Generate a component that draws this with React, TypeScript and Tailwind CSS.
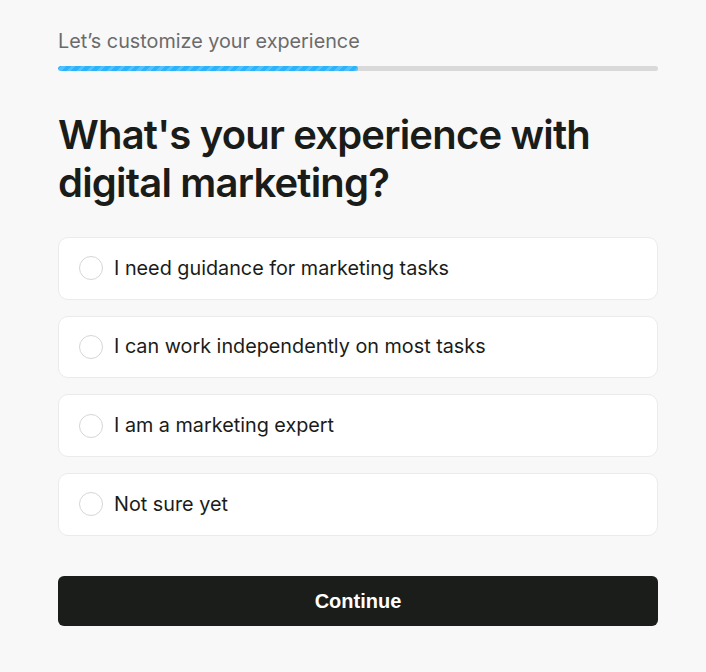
import React from "react";

const options = [
  "I need guidance for marketing tasks",
  "I can work independently on most tasks",
  "I am a marketing expert",
  "Not sure yet",
];

export default function App() {
  return (
    <div className="min-h-[672px] w-full bg-[#f8f8f8] flex" style={{ fontFamily: "Inter, 'Noto Sans', sans-serif" }}>
      <div className="ml-[58px] w-[600px] pt-[28px] flex flex-col">
        <div className="text-[19.8px] leading-[26px] text-[#6b6b6b]">Let’s customize your experience</div>
        <div className="mt-[12px] h-[5px] w-full rounded-full bg-[#d9d9d9] overflow-hidden">
          <div
            className="h-full w-1/2 rounded-full"
            style={{
              backgroundColor: "#2bb3fb",
              backgroundImage:
                "repeating-linear-gradient(-45deg, rgba(255,255,255,0.18) 0 3px, transparent 3px 7px)",
            }}
          />
        </div>
        <h1 className="mt-[40px] text-[40px] leading-[48px] font-semibold tracking-[-0.02em] text-[#1a1c1a]">
          What's your experience with digital marketing?
        </h1>
        <div className="mt-[30px] flex flex-col gap-[16px]">
          {options.map((o) => (
            <label
              key={o}
              className="h-[62.7px] bg-white border border-[#ebebeb] rounded-[10px] flex items-center pl-[20px] gap-[11px] cursor-pointer"
            >
              <span className="w-[24px] h-[24px] rounded-full border border-[#d6d6d6] bg-white shrink-0" />
              <span className="text-[19.8px] text-[#1a1c1a]">{o}</span>
            </label>
          ))}
        </div>
        <button
          className="mt-[40px] h-[50px] w-full rounded-[6px] bg-[#1a1d1a] text-white text-[20px] font-bold"
          style={{ fontFamily: "'Liberation Sans', Arial, sans-serif" }}
        >
          Continue
        </button>
      </div>
    </div>
  );
}
